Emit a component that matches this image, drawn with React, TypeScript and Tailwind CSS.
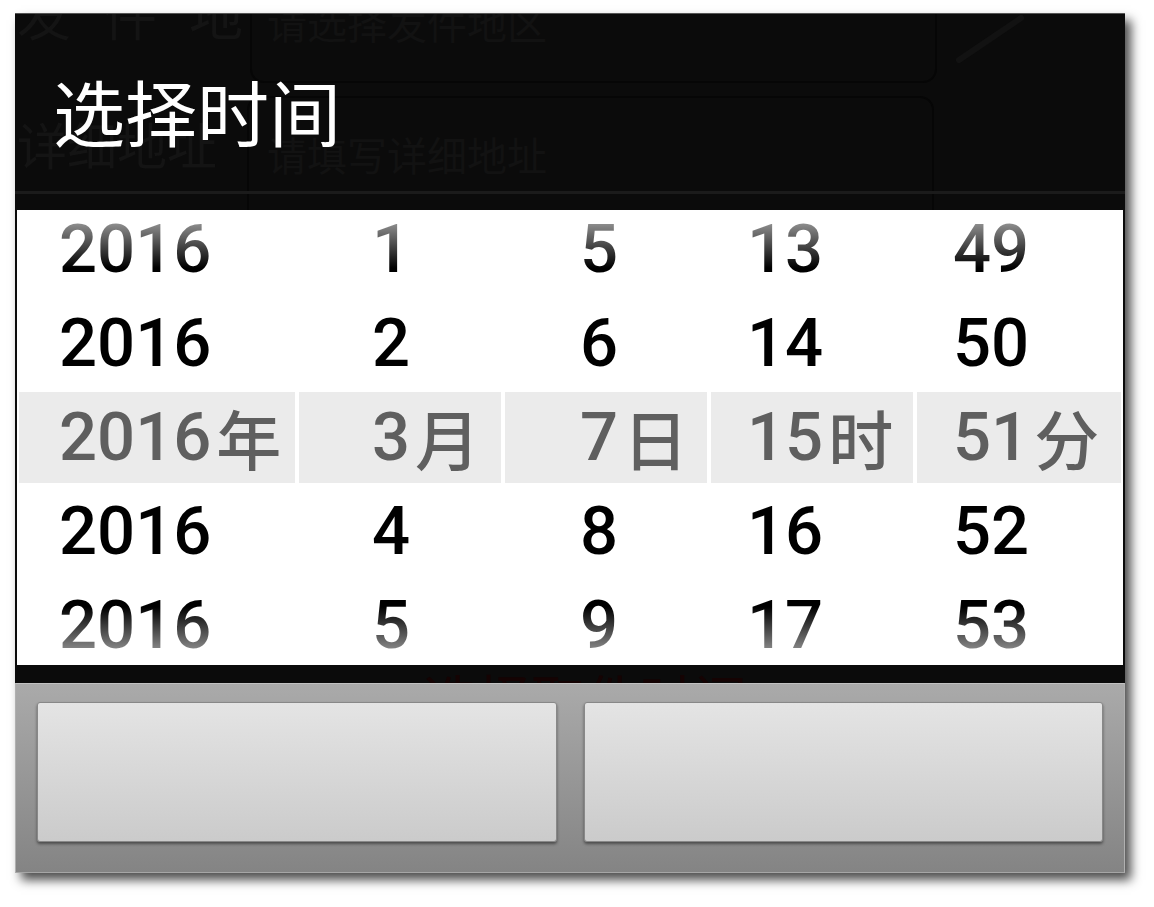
import React from "react";

const cols: { w: string; pl: string; items: string[] }[] = [
  { w: "w-[280px]", pl: "pl-[40px]", items: ["2016", "2016", "2016年", "2016", "2016"] },
  { w: "w-[206px]", pl: "pl-[73px]", items: ["1", "2", "3月", "4", "5"] },
  { w: "w-[206px]", pl: "pl-[75px]", items: ["5", "6", "7日", "8", "9"] },
  { w: "w-[206px]", pl: "pl-[36px]", items: ["13", "14", "15时", "16", "17"] },
  { w: "w-[208px]", pl: "pl-[36px]", items: ["49", "50", "51分", "52", "53"] },
];

function Ghost() {
  return (
    <div className="absolute inset-0 overflow-hidden pointer-events-none font-['Noto_Sans_CJK_SC',sans-serif]">
      <div className="absolute left-[2px] top-[-28px] text-[54px] leading-none text-[#141414] tracking-[32px]">发件地</div>
      <div className="absolute left-[235px] top-[-30px] w-[687px] h-[99px] rounded-[14px] border-2 border-[#060606]" />
      <div className="absolute left-[252px] top-[-12px] text-[40px] leading-none text-[#121212]">请选择发件地区</div>
      <div className="absolute left-[2px] top-[104px] text-[50px] leading-none text-[#141414]">详细地址</div>
      <div className="absolute left-[232px] top-[82px] w-[687px] h-[130px] rounded-[14px] border-2 border-[#060606]" />
      <div className="absolute left-[252px] top-[120px] text-[40px] leading-none text-[#121212]">请填写详细地址</div>
      <svg className="absolute left-[940px] top-[0px]" width="70" height="50" viewBox="0 0 70 50">
        <path d="M66 4 L4 46" stroke="#121212" strokeWidth="6" strokeLinecap="round" />
      </svg>
      <div className="absolute left-0 right-0 top-[177px] h-[3px] bg-[#1b1b1b]" />
    </div>
  );
}

export default function App() {
  return (
    <div className="w-[1154px] h-[907px] bg-white overflow-hidden">
      <div className="ml-[15px] mt-[13px] w-[1110px] h-[860px] flex flex-col bg-[#0b0b0b] shadow-[6px_7px_10px_rgba(0,0,0,0.7)]">
        {/* Header */}
        <div className="relative h-[197px] border-t border-[#555] flex items-center">
          <Ghost />
          <div className="relative pl-[38px] pb-[4px] text-[72px] leading-none text-white font-['Noto_Sans_CJK_SC',sans-serif]">
            选择时间
          </div>
        </div>

        {/* Picker */}
        <div className="relative mx-[2px] h-[455px] bg-white overflow-hidden flex font-['Roboto','Noto_Sans_CJK_SC',sans-serif] font-medium">
          {cols.map((c, ci) => (
            <div key={ci} className={`${c.w} shrink-0 flex flex-col -mt-[7px]`}>
              {c.items.map((t, ri) => {
                const sel = ri === 2;
                return (
                  <div key={ri} className="h-[94px] shrink-0 px-[2px] pt-[1px] pb-[2px]">
                    <div
                      className={`h-full flex items-center ${c.pl} text-[67px] leading-none whitespace-nowrap ${
                        sel ? "bg-[#ebebeb] text-[#5f5f5f]" : "text-black"
                      }`}
                    >
                      {sel ? (
                        <>
                          <span>{t.slice(0, -1)}</span>
                          <span className="ml-[5px] font-['Noto_Sans_CJK_SC',sans-serif] text-[65px]">{t.slice(-1)}</span>
                        </>
                      ) : (
                        t
                      )}
                    </div>
                  </div>
                );
              })}
            </div>
          ))}
          <div className="absolute left-0 right-0 top-0 h-[58px] pointer-events-none bg-[linear-gradient(to_bottom,rgba(255,255,255,0.72),rgba(255,255,255,0))]" />
          <div className="absolute left-0 right-0 bottom-0 h-[58px] pointer-events-none bg-[linear-gradient(to_top,rgba(255,255,255,0.72),rgba(255,255,255,0))]" />
        </div>

        {/* Black strip with ghost text */}
        <div className="relative h-[18px] overflow-hidden">
          <div className="absolute left-[408px] bottom-[-2px] text-[54px] leading-none text-[#150303] font-['Noto_Sans_CJK_SC',sans-serif] translate-y-[40px]">
            选择取件时间
          </div>
        </div>

        {/* Button bar */}
        <div className="h-[190px] flex gap-[27px] px-[21px] pt-[18px] pb-[30px] border-t border-[#c2c2c2] border-x border-b border-x-[#b0b0b0] border-b-[#a6a6a6] bg-[linear-gradient(to_bottom,#aaaaaa,#848484)]">
          <button className="flex-1 rounded-[3px] border border-[#888] bg-[linear-gradient(to_bottom,#e4e4e4,#cbcbcb)] shadow-[0_2px_3px_rgba(0,0,0,0.45)]" />
          <button className="flex-1 rounded-[3px] border border-[#888] bg-[linear-gradient(to_bottom,#e4e4e4,#cbcbcb)] shadow-[0_2px_3px_rgba(0,0,0,0.45)]" />
        </div>
      </div>
    </div>
  );
}
